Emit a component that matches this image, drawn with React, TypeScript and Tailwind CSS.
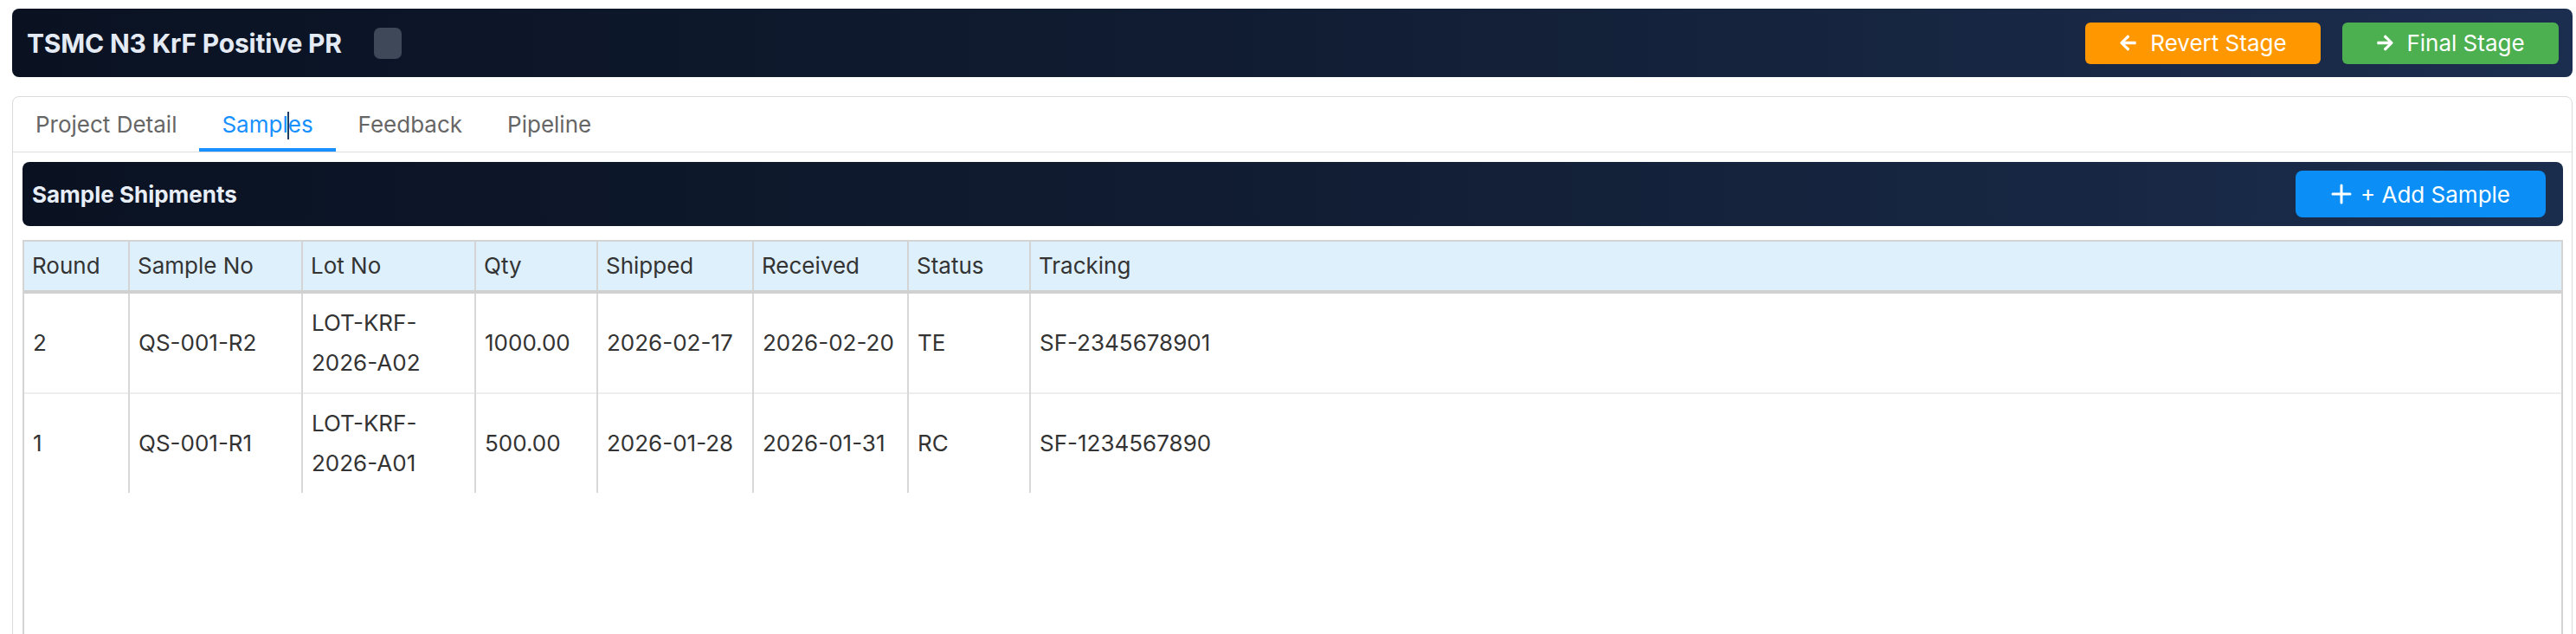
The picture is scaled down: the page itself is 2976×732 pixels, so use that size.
import { FaArrowLeft, FaArrowRight } from "react-icons/fa";

const rows = [
  {
    round: "2",
    sample: "QS-001-R2",
    lot: ["LOT-KRF-", "2026-A02"],
    qty: "1000.00",
    shipped: "2026-02-17",
    received: "2026-02-20",
    status: "TE",
    tracking: "SF-2345678901",
  },
  {
    round: "1",
    sample: "QS-001-R1",
    lot: ["LOT-KRF-", "2026-A01"],
    qty: "500.00",
    shipped: "2026-01-28",
    received: "2026-01-31",
    status: "RC",
    tracking: "SF-1234567890",
  },
];

const headers = ["Round", "Sample No", "Lot No", "Qty", "Shipped", "Received", "Status", "Tracking"];

function PlusIcon() {
  return (
    <svg width="24" height="24" viewBox="0 0 24 24" fill="none">
      <path d="M12 2v20M2 12h20" stroke="white" strokeWidth="3" strokeLinecap="round" />
    </svg>
  );
}

export default function App() {
  return (
    <div className="h-[732px] overflow-hidden bg-white pt-[10px] pl-[14px] pr-[4px] font-[Inter,sans-serif]">
      {/* Top header */}
      <div className="flex h-[79px] items-center justify-between rounded-[8px] bg-linear-to-r from-[#0a1222] via-[#111d33] to-[#1c2e4f] pl-[17px] pr-[16px]">
        <div className="flex items-center">
          <h1 className="text-[30px] font-bold leading-none tracking-[-0.2px] text-[#e4ebf5]">TSMC N3 KrF Positive PR</h1>
          <div className="ml-[37px] h-[36px] w-[32px] rounded-[7px] bg-[#3e4859]" />
        </div>
        <div className="flex gap-[25px]">
          <button className="flex h-[48px] w-[272px] items-center justify-center gap-[15px] rounded-[6px] bg-[#ff9800] text-[26px] text-white">
            <FaArrowLeft size={21} />
            Revert Stage
          </button>
          <button className="flex h-[48px] w-[250px] items-center justify-center gap-[14px] rounded-[6px] bg-[#4caf50] text-[26px] text-white">
            <FaArrowRight size={21} />
            Final Stage
          </button>
        </div>
      </div>

      {/* Card */}
      <div className="mt-[22px] rounded-t-[8px] border border-[#dadada]">
        <div className="flex h-[64px] border-b border-[#dedede]">
          <div className="flex items-center px-[26px] text-[26px] text-[#666666]">Project Detail</div>
          <div className="relative flex items-center px-[26px] text-[26px] text-[#1890ff]">
            <span>
              Sampl
              <span className="relative inline-block h-0 w-0">
                <span className="absolute left-[-1px] top-[-24px] h-[32px] w-[2px] bg-[#1d3c66]" />
              </span>
              es
            </span>
            <span className="absolute bottom-0 left-0 right-0 h-[4px] bg-[#1890ff]" />
          </div>
          <div className="flex items-center px-[26px] text-[26px] text-[#666666]">Feedback</div>
          <div className="flex items-center px-[26px] text-[26px] text-[#666666]">Pipeline</div>
        </div>

        <div className="pl-[11px] pr-[10px] pt-[11px]">
          <div className="flex h-[74px] items-center justify-between rounded-[8px] bg-linear-to-r from-[#0a1222] via-[#111d33] to-[#1b2d4d] pl-[11px] pr-[20px]">
            <span className="text-[26px] font-bold text-[#e8eef7]">Sample Shipments</span>
            <button className="flex h-[54px] w-[289px] items-center justify-center gap-[10px] rounded-[8px] bg-[#0b8ef5] text-[26px] text-white">
              <PlusIcon />+ Add Sample
            </button>
          </div>

          <div className="mt-[16px] h-[600px] border-2 border-[#d4d4d4]">
            <table className="w-full table-fixed border-collapse text-[26px] text-[#333333]">
              <colgroup>
                <col className="w-[121px]" />
                <col className="w-[200px]" />
                <col className="w-[200px]" />
                <col className="w-[141px]" />
                <col className="w-[180px]" />
                <col className="w-[179px]" />
                <col className="w-[141px]" />
                <col />
              </colgroup>
              <thead>
                <tr className="bg-[#def0fc]">
                  {headers.map((h, i) => (
                    <th
                      key={h}
                      className={`h-[58px] border-b-[4px] border-b-[#d0d0d0] px-[9px] text-left font-normal leading-[46px] ${
                        i < headers.length - 1 ? "border-r-2 border-r-[#d4d4d4]" : ""
                      }`}
                    >
                      {h}
                    </th>
                  ))}
                </tr>
              </thead>
              <tbody>
                {rows.map((r, ri) => {
                  const cells = [r.round, r.sample, null, r.qty, r.shipped, r.received, r.status, r.tracking];
                  return (
                    <tr key={ri} className={ri === 0 ? "border-b-2 border-b-[#eeeeee]" : ""}>
                      {cells.map((c, ci) => (
                        <td
                          key={ci}
                          className={`px-[10px] py-[11px] align-middle leading-[46px] ${
                            ci < cells.length - 1 ? "border-r-2 border-r-[#d8d8d8]" : ""
                          }`}
                        >
                          {c === null ? (
                            <>
                              <span className="block">{r.lot[0]}</span>
                              <span className="block">{r.lot[1]}</span>
                            </>
                          ) : (
                            c
                          )}
                        </td>
                      ))}
                    </tr>
                  );
                })}
              </tbody>
            </table>
          </div>
        </div>
      </div>
    </div>
  );
}
